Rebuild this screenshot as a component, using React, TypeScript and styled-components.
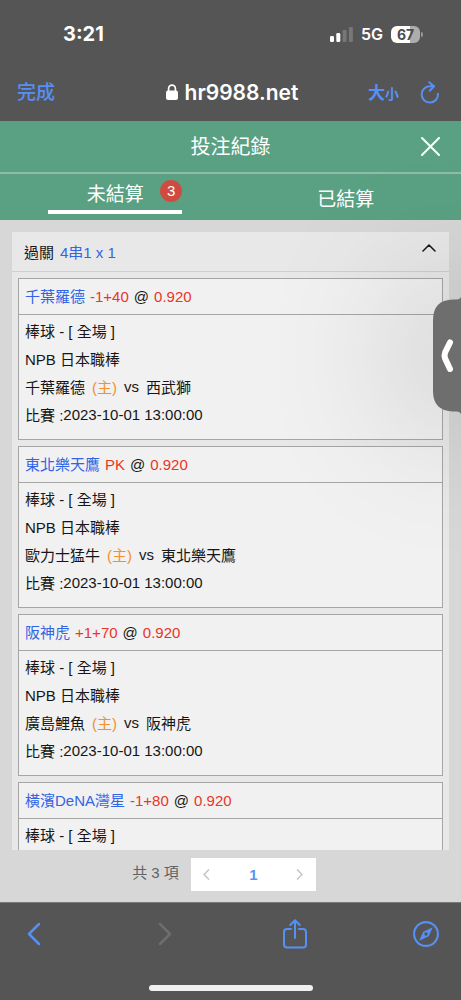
import React, { useState } from "react";
import styled, { createGlobalStyle } from "styled-components";

const GlobalStyle = createGlobalStyle`
  * { box-sizing: border-box; }
  body {
    margin: 0;
    font-family: "Liberation Sans", "Noto Sans CJK TC", sans-serif;
    color: #161616;
  }
  button {
    padding: 0;
    border: 0;
    background: none;
    font: inherit;
    color: inherit;
    cursor: pointer;
  }
  svg { display: block; }
`;

const chrome = "#555555";
const iosBlue = "#5690f6";
const green = "#5aa183";
const line = "#a6a6a6";

const Shell = styled.div`
  display: flex;
  flex-direction: column;
  height: 100vh;
  overflow: hidden;
  background: ${chrome};
`;

const BrowserHeader = styled.header`
  flex: none;
  padding-bottom: 5px;
  color: #fff;
  font-family: Inter, "Noto Sans CJK TC", sans-serif;
`;

const StatusBar = styled.div`
  display: flex;
  align-items: center;
  justify-content: space-between;
  height: 68px;
  padding: 0 38px 0 63px;
`;

const Clock = styled.time`
  font-size: 20px;
  font-weight: 700;
`;

const StatusIcons = styled.div`
  display: flex;
  align-items: center;
  gap: 8px;
  font-size: 16px;
  font-weight: 600;
`;

const Battery = styled.div`
  display: flex;
  align-items: center;
  gap: 1px;
`;

const BatteryBody = styled.div`
  width: 29px;
  height: 17px;
  border-radius: 6px;
  background: linear-gradient(90deg, #fff 67%, #adadad 67%);
  color: #4c4c4c;
  font-size: 14px;
  font-weight: 700;
  line-height: 17px;
  text-align: center;
`;

const BatteryTip = styled.div`
  width: 2px;
  height: 5px;
  border-radius: 0 2px 2px 0;
  background: #999;
`;

const AddressBar = styled.nav`
  display: grid;
  grid-template-columns: 1fr auto 1fr;
  align-items: center;
  height: 48px;
  padding: 0 14px 0 17px;
`;

const DoneButton = styled.button`
  justify-self: start;
  padding-bottom: 3px;
  color: ${iosBlue};
  font-size: 19px;
  font-weight: 500;
`;

const Address = styled.div`
  display: flex;
  align-items: center;
  gap: 7px;
  font-size: 21px;
  font-weight: 600;
`;

const AddressActions = styled.div`
  display: flex;
  align-items: center;
  justify-self: end;
  gap: 21px;
  padding-right: 7px;
  color: ${iosBlue};
`;

const TextSizeButton = styled.button`
  padding-bottom: 2px;
  font-size: 17px;
  font-weight: 700;
  small { font-size: 14px; }
`;

const Site = styled.main`
  position: relative;
  display: flex;
  flex: 1;
  flex-direction: column;
  min-height: 0;
  overflow: hidden;
  background: #d7d7d7;
`;

const TitleBar = styled.div`
  display: grid;
  grid-template-columns: 1fr auto 1fr;
  align-items: center;
  flex: none;
  height: 53px;
  padding: 0 21px;
  border-bottom: 2px solid #93bca8;
  background: ${green};
  color: #fff;
`;

const Title = styled.h1`
  grid-column: 2;
  margin: 0;
  font-size: 20px;
  font-weight: 400;
  line-height: 28px;
`;

const CloseButton = styled.button`
  justify-self: end;
`;

const Tabs = styled.div`
  display: grid;
  grid-template-columns: 1fr 1fr;
  flex: none;
  height: 46px;
  background: ${green};
  color: #fff;
  font-size: 19px;
`;

const Tab = styled.button<{ $active: boolean }>`
  position: relative;
  justify-self: center;
  align-self: ${(p) => (p.$active ? "start" : "center")};
  width: 134px;
  height: 40px;
  border-bottom: ${(p) => (p.$active ? "4px solid #fff" : "0")};
`;

const Badge = styled.span`
  position: absolute;
  top: 6px;
  right: 0;
  width: 22px;
  height: 22px;
  border-radius: 50%;
  background: #cf4b42;
  font-size: 15px;
  line-height: 22px;
`;

const List = styled.section`
  flex: 1;
  min-height: 0;
  margin: 12px 12px 0;
  overflow-y: auto;
  scrollbar-width: none;
  background: #e8e8e8;
  font-size: 15px;
`;

const GroupHeader = styled.button`
  display: flex;
  align-items: center;
  gap: 6px;
  width: 100%;
  height: 40px;
  padding: 0 13px 0 12px;
  border-bottom: 1px solid #cfcfcf;
  svg { margin-left: auto; margin-bottom: 8px; }
`;

const Bets = styled.div`
  display: flex;
  flex-direction: column;
  gap: 6px;
  padding: 6px 6px 0;
`;

const Bet = styled.article`
  border: 1px solid ${line};
  background: #f1f1f1;
`;

const BetHead = styled.h2`
  display: flex;
  gap: 5px;
  height: 36px;
  margin: 0;
  padding: 0 6px;
  border-bottom: 1px solid ${line};
  font-size: 15px;
  font-weight: 400;
  line-height: 35px;
`;

const BetBody = styled.div`
  padding: 3px 6px 9px;
`;

const BetLine = styled.p<{ $gap?: number }>`
  display: flex;
  gap: ${(p) => p.$gap ?? 0}px;
  height: 28px;
  margin: 0;
  line-height: 28px;
`;

const Latin = styled.span`
  line-height: 25px;
`;

const Ink = styled.span<{ $tone: "blue" | "red" | "orange" }>`
  color: ${(p) => ({ blue: "#3264e6", red: "#ea3528", orange: "#f2902e" })[p.$tone]};
`;

const Pagination = styled.nav`
  display: flex;
  align-items: center;
  justify-content: center;
  flex: none;
  gap: 12px;
  height: 52px;
  padding: 0 13px 4px 0;
  color: #606266;
  font-size: 15px;
`;

const Total = styled.span`
  line-height: 20px;
  padding-bottom: 2px;
`;

const Pager = styled.div`
  display: grid;
  grid-template-columns: 32px 61px 32px;
  place-items: center;
  height: 33px;
  background: #fff;
`;

const PageNumber = styled.button`
  color: #5597ef;
  font-weight: 700;
`;

const DrawerHandle = styled.button`
  position: absolute;
  top: 176px;
  right: 0;
  width: 28px;
  height: 117px;
`;

const HandleShade = styled.div`
  position: absolute;
  top: 190px;
  right: -20px;
  width: 40px;
  height: 88px;
  border-radius: 20px;
  box-shadow: 0 0 150px 12px rgba(0, 0, 0, 0.42);
  pointer-events: none;
`;

const BrowserFooter = styled.footer`
  flex: none;
  padding-bottom: 9px;
  border-top: 1px solid #7b7b7b;
`;

const Toolbar = styled.nav`
  display: flex;
  align-items: center;
  justify-content: space-between;
  height: 62px;
  padding: 0 22px 0 21px;
  color: ${iosBlue};
`;

const ToolButton = styled.button`
  display: flex;
  justify-content: center;
  width: 26px;
  &:disabled { color: #6e6e6e; cursor: default; }
`;

const HomeBar = styled.div`
  width: 164px;
  height: 6px;
  margin: 20px auto 0;
  border-radius: 3px;
  background: #f0f0f0;
`;

type BetData = {
  pick: string;
  odds: string;
  match?: { league: string; home: string; away: string; start: string };
};

const bets: BetData[] = [
  {
    pick: "千葉羅德",
    odds: "-1+40",
    match: { league: "NPB 日本職棒", home: "千葉羅德", away: "西武獅", start: "2023-10-01 13:00:00" },
  },
  {
    pick: "東北樂天鷹",
    odds: "PK",
    match: { league: "NPB 日本職棒", home: "歐力士猛牛", away: "東北樂天鷹", start: "2023-10-01 13:00:00" },
  },
  {
    pick: "阪神虎",
    odds: "+1+70",
    match: { league: "NPB 日本職棒", home: "廣島鯉魚", away: "阪神虎", start: "2023-10-01 13:00:00" },
  },
  { pick: "橫濱DeNA灣星", odds: "-1+80" },
];

const Stroke = ({ d, w, h, s = 2 }: { d: string; w: number; h: number; s?: number }) => (
  <svg width={w} height={h} viewBox={`0 0 ${w} ${h}`} fill="none" stroke="currentColor" strokeWidth={s} strokeLinecap="round" strokeLinejoin="round">
    <path d={d} />
  </svg>
);

const BetCard = ({ bet }: { bet: BetData }) => (
  <Bet>
    <BetHead>
      <Ink $tone="blue">{bet.pick}</Ink>
      <Ink $tone="red">{bet.odds}</Ink>
      <span>@</span>
      <Ink $tone="red">0.920</Ink>
    </BetHead>
    <BetBody>
      <BetLine>棒球 - [ 全場 ]</BetLine>
      {bet.match && (
        <>
          <BetLine>{bet.match.league}</BetLine>
          <BetLine $gap={7}>
            <span>{bet.match.home}</span>
            <Ink $tone="orange">(主)</Ink>
            <Latin>vs</Latin>
            <span>{bet.match.away}</span>
          </BetLine>
          <BetLine>
            <span>比賽 :</span>
            <Latin>{bet.match.start}</Latin>
          </BetLine>
        </>
      )}
    </BetBody>
  </Bet>
);

export default function App() {
  const [open, setOpen] = useState(true);
  return (
    <Shell>
      <GlobalStyle />
      <BrowserHeader>
        <StatusBar>
          <Clock>3:21</Clock>
          <StatusIcons>
            <svg width="23" height="15" viewBox="0 0 23 15" fill="#fff">
              <rect x="0" y="9" width="4" height="6" rx="1.3" />
              <rect x="6.3" y="6" width="4" height="9" rx="1.3" />
              <rect x="12.6" y="3" width="4" height="12" rx="1.3" fill="#777" />
              <rect x="18.9" y="0" width="4" height="15" rx="1.3" fill="#777" />
            </svg>
            <span>5G</span>
            <Battery>
              <BatteryBody>67</BatteryBody>
              <BatteryTip />
            </Battery>
          </StatusIcons>
        </StatusBar>
        <AddressBar>
          <DoneButton>完成</DoneButton>
          <Address>
            <svg width="12" height="16" viewBox="0 0 12 16">
              <rect x="0" y="6.5" width="12" height="9.5" rx="2" fill="#fff" />
              <path d="M2.6 7.5V4.6a3.4 3.4 0 0 1 6.8 0V7.5" fill="none" stroke="#fff" strokeWidth="1.7" />
            </svg>
            <span>hr9988.net</span>
          </Address>
          <AddressActions>
            <TextSizeButton>
              大<small>小</small>
            </TextSizeButton>
            <button aria-label="重新載入">
              <svg width="20" height="23" viewBox="0 0 20 23" fill="none" stroke="currentColor" strokeWidth="2" strokeLinecap="round" strokeLinejoin="round">
                <path d="M18 12.700A8.200 8.200 0 1 1 9.800 5.200Q12 4.800 14 5.200" />
                <path d="M9.300 1.200L14 5.200L9.800 9.700" />
              </svg>
            </button>
          </AddressActions>
        </AddressBar>
      </BrowserHeader>

      <Site>
        <TitleBar>
          <Title>投注紀錄</Title>
          <CloseButton aria-label="關閉">
            <Stroke w={19} h={19} d="M1 1L18 18M18 1L1 18" />
          </CloseButton>
        </TitleBar>
        <Tabs role="tablist">
          <Tab role="tab" aria-selected $active>
            未結算<Badge>3</Badge>
          </Tab>
          <Tab role="tab" aria-selected={false} $active={false}>
            已結算
          </Tab>
        </Tabs>
        <List>
          <GroupHeader aria-expanded={open} onClick={() => setOpen(!open)}>
            <span>過關</span>
            <Ink $tone="blue">4串1 x 1</Ink>
            <Stroke w={14} h={8} s={1.5} d="M1 7L7 1L13 7" />
          </GroupHeader>
          {open && (
            <Bets>
              {bets.map((bet) => (
                <BetCard key={bet.pick} bet={bet} />
              ))}
            </Bets>
          )}
        </List>
        <Pagination>
          <Total>共 3 項</Total>
          <Pager>
            <button aria-label="上一頁">
              <svg width="7" height="11" viewBox="0 0 7 11" fill="none" stroke="#c0c4cc" strokeWidth="1.5"><path d="M6 .5l-5 5 5 5" /></svg>
            </button>
            <PageNumber>1</PageNumber>
            <button aria-label="下一頁">
              <svg width="7" height="11" viewBox="0 0 7 11" fill="none" stroke="#c0c4cc" strokeWidth="1.5"><path d="M1 .5l5 5-5 5" /></svg>
            </button>
          </Pager>
        </Pagination>
        <HandleShade />
        <DrawerHandle aria-label="展開">
          <svg width="28" height="117" viewBox="0 0 28 117">
            <path d="M28 0Q27 2.500 23 2.500H20Q0 3 0 23V94Q0 114 20 114.500H23Q27 114.500 28 117Z" fill="#6e6e6e" />
            <path d="M17 45.500L12.100 55.500Q11 58.500 12.100 61.500L17 72" fill="none" stroke="#fff" strokeWidth="6" strokeLinecap="round" />
          </svg>
        </DrawerHandle>
      </Site>

      <BrowserFooter>
        <Toolbar>
          <ToolButton aria-label="返回"><Stroke w={14} h={24} s={2.5} d="M12 2L2 12L12 22" /></ToolButton>
          <ToolButton aria-label="前進" disabled><Stroke w={14} h={24} s={2.5} d="M2 2L12 12L2 22" /></ToolButton>
          <ToolButton aria-label="分享">
            <svg width="24" height="30" viewBox="0 0 24 30" fill="none" stroke="currentColor" strokeWidth="2" strokeLinecap="round" strokeLinejoin="round">
              <path d="M8 10H4a3 3 0 0 0-3 3V25.500a3 3 0 0 0 3 3H20a3 3 0 0 0 3-3V13a3 3 0 0 0-3-3H16" />
              <path d="M12 19V1.500M7.300 6L12 1.300L16.700 6" />
            </svg>
          </ToolButton>
          <ToolButton aria-label="Safari">
            <svg width="26" height="26" viewBox="0 0 26 26">
              <circle cx="13" cy="13" r="11.900" fill="none" stroke="currentColor" strokeWidth="2.100" />
              <path fillRule="evenodd" fill="currentColor" d="M19.800 6.200L15.800 15.200L6.200 19.800L10.200 10.800ZM13 11.300a1.700 1.700 0 1 0 0 3.400a1.700 1.700 0 1 0 0-3.400Z" />
            </svg>
          </ToolButton>
        </Toolbar>
        <HomeBar />
      </BrowserFooter>
    </Shell>
  );
}
